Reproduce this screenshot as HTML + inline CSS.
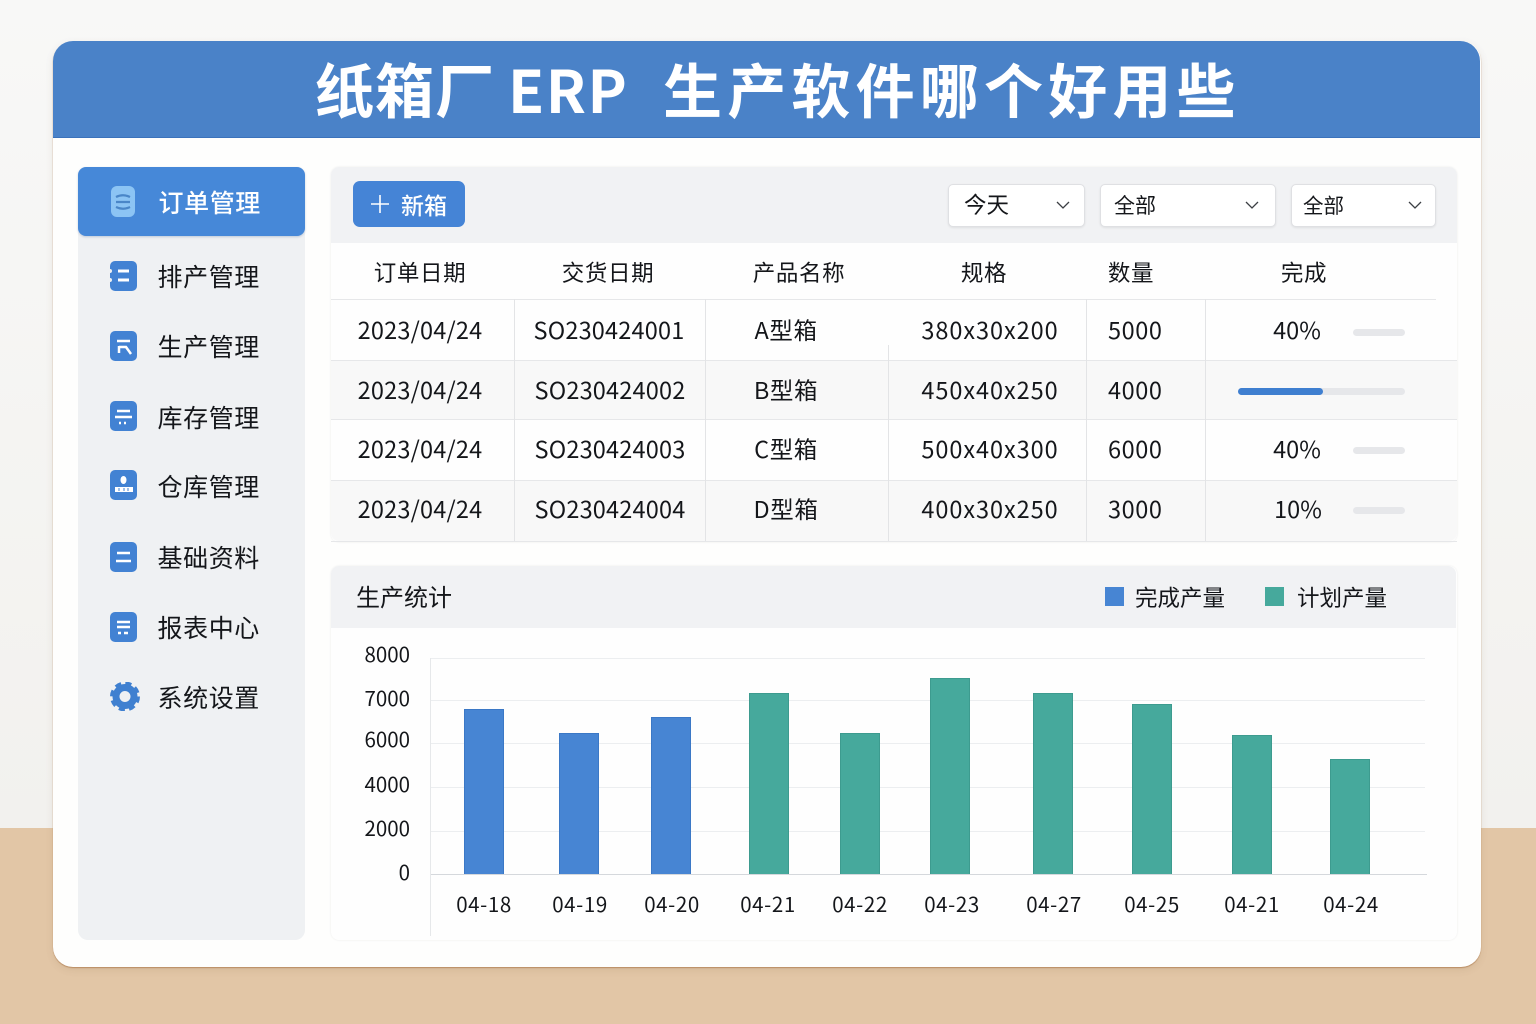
<!DOCTYPE html>
<html lang="zh-CN"><head><meta charset="utf-8"><title>纸箱厂 ERP 生产软件哪个好用些</title>
<style>
*{margin:0;padding:0;box-sizing:border-box}
html,body{width:1536px;height:1024px;overflow:hidden}
body{position:relative;background:linear-gradient(#f8f8f7,#f2f1ee 828px);font-family:"Liberation Sans","Noto Sans CJK SC",sans-serif;color:#14161a}
div,span,svg{position:absolute}
.t{font-family:"Noto Sans CJK SC",sans-serif;white-space:nowrap;line-height:30px;height:30px;font-size:23.5px}
.c{transform:translateX(-50%)}
.n{font-size:25px;letter-spacing:.6px;left:157.5px}
.h{font-size:22.5px;letter-spacing:.6px}
.y{font-size:20.5px;text-align:right;right:1126px}
.x{font-size:20.5px;letter-spacing:.6px}
.d{letter-spacing:.2px}
.s{letter-spacing:.95px}
.q{letter-spacing:.6px}
.ti{top:44px;height:88px;line-height:88px;font-size:59px;font-weight:700;color:#fff}
.v{background:#e3e4e6;width:1px;top:299px;height:242px}
.r{background:#e6e7e9;height:1px;left:331px;width:1126px}
.g{background:#eceef0;height:1px;left:430px;width:995px}
.bb{background:#4785d3;border:1px solid #3b78c6;border-bottom:0;width:40px}
.bg{background:#46a99c;border:1px solid #3d9b8f;border-bottom:0;width:40px}
.sel{background:#fff;border:1px solid #dfe0e3;border-radius:5px;top:184px;height:43px;box-shadow:0 1px 2px rgba(0,0,0,.08)}
.tr{background:#e6e7ea;height:7px;border-radius:4px}
.ic{left:110px;width:27px;height:30px;background:#4282d3;border-radius:5px}
</style></head><body>
<div style="left:0;top:828px;width:1536px;height:196px;background:#e2c6a6"></div>
<div style="left:53px;top:41px;width:1428px;height:926px;background:#fefefd;border-radius:20px;box-shadow:0 1px 1px #b98c62,0 3px 8px rgba(120,90,60,.12)"></div>
<div style="left:53px;top:41px;width:1427px;height:97px;background:#4a82c8;border-radius:20px 20px 0 0;border-bottom:1px solid #3b72bb"></div>
<span class="t ti" style="left:315px;letter-spacing:1px">纸箱厂</span>
<span class="t ti" style="left:508px;letter-spacing:1.5px">ERP</span>
<span class="t ti" style="left:663px;letter-spacing:5.2px">生产软件哪个好用些</span>

<div style="left:78px;top:167px;width:227px;height:773px;background:#eff1f3;border-radius:10px"></div>
<div style="left:78px;top:167px;width:227px;height:69px;background:#4688d8;border-radius:8px;box-shadow:0 1px 2px rgba(40,80,140,.25)"></div>
<svg style="left:110px;top:186px" width="26" height="32" viewBox="0 0 26 32"><rect x="1" y="0" width="24" height="31" rx="6" fill="#8cc4f4"/><path d="M6 11q7-3.500 14 0M6 16h14M6 21q7 3.500 14 0" stroke="#4a86c8" stroke-width="2.200" fill="none"/></svg>
<span class="t n" style="top:187px;left:158.500px;color:#fff;font-weight:500">订单管理</span>

<svg class="ic" style="top:261px" viewBox="0 0 27 30"><path d="M8 10h11M8 19h11" stroke="#fff" stroke-width="3"/><circle cx="0" cy="10" r="2" fill="#eff1f3"/><circle cx="0" cy="19" r="2" fill="#eff1f3"/></svg>
<span class="t n" style="top:261px">排产管理</span>
<svg class="ic" style="top:331px" viewBox="0 0 27 30"><path d="M7 10h13M9 15v7M9 16h7l5 7" stroke="#fff" stroke-width="2.500" fill="none"/></svg>
<span class="t n" style="top:331px">生产管理</span>
<svg class="ic" style="top:401px" viewBox="0 0 27 30"><path d="M7 10h13M5 16h17M9 22h2M14 22h2" stroke="#fff" stroke-width="2.500" fill="none"/></svg>
<span class="t n" style="top:402px">库存管理</span>
<svg class="ic" style="top:470px" viewBox="0 0 27 30"><ellipse cx="13.500" cy="10" rx="3" ry="4" fill="#fff"/><rect x="5" y="17" width="18" height="5" fill="#fff"/><path d="M9 18v3M14 18v3M18 18v3" stroke="#4282d3"/></svg>
<span class="t n" style="top:471px">仓库管理</span>
<svg class="ic" style="top:542px" viewBox="0 0 27 30"><path d="M7 11h13M6 19h15" stroke="#fff" stroke-width="2.500"/></svg>
<span class="t n" style="top:542px">基础资料</span>
<svg class="ic" style="top:612px" viewBox="0 0 27 30"><path d="M7 10h13M7 15h13M8 21h3M14 21h4" stroke="#fff" stroke-width="2.500"/></svg>
<span class="t n" style="top:612px">报表中心</span>
<svg style="left:110px;top:682px" width="30" height="29" viewBox="0 0 30 29"><circle cx="15" cy="14.500" r="9" fill="none" stroke="#3f80d0" stroke-width="7"/><circle cx="15" cy="14.500" r="13" fill="none" stroke="#3f80d0" stroke-width="4" stroke-dasharray="6 4.200"/></svg>
<span class="t n" style="top:682px">系统设置</span>

<div style="left:331px;top:167px;width:1126px;height:375px;background:#fefefe;border-radius:8px;box-shadow:0 0 2px rgba(0,0,0,.08)"></div>
<div style="left:331px;top:167px;width:1126px;height:76px;background:#f1f2f4;border-radius:8px 8px 0 0"></div>
<div style="left:353px;top:181px;width:112px;height:46px;background:#4584d6;border-radius:7px"></div>
<svg style="left:370px;top:194px" width="20" height="20"><path d="M10 1v18M1 10h18" stroke="#fff" stroke-width="1.600"/></svg>
<span class="t" style="left:401px;top:189px;color:#fff;font-size:23px;font-weight:500">新箱</span>
<div class="sel" style="left:948px;width:137px"></div><span class="t" style="left:964px;top:189px;font-size:22.500px">今天</span>
<div class="sel" style="left:1100px;width:176px"></div><span class="t" style="left:1114px;top:190px;font-size:21px">全部</span>
<div class="sel" style="left:1291px;width:145px"></div><span class="t" style="left:1303px;top:189px;font-size:20.500px">全部</span>
<svg style="left:1056px;top:200px" width="14" height="10"><path d="M1 2l6 6 6-6" fill="none" stroke="#3c3f44" stroke-width="1.300"/></svg>
<svg style="left:1245px;top:200px" width="14" height="10"><path d="M1 2l6 6 6-6" fill="none" stroke="#3c3f44" stroke-width="1.300"/></svg>
<svg style="left:1408px;top:200px" width="14" height="10"><path d="M1 2l6 6 6-6" fill="none" stroke="#3c3f44" stroke-width="1.300"/></svg>

<div style="left:331px;top:361px;width:1126px;height:58px;background:#f8f8f8"></div>
<div style="left:331px;top:481px;width:1126px;height:60px;background:#f8f8f8;border-radius:0 0 8px 8px"></div>
<div class="r" style="top:299px;width:1105px"></div><div class="r" style="top:360px"></div><div class="r" style="top:419px"></div><div class="r" style="top:480px"></div><div class="r" style="top:541px"></div>
<div class="v" style="left:514px"></div><div class="v" style="left:705px"></div><div class="v" style="left:888px;top:345px;height:196px"></div><div class="v" style="left:1086px"></div><div class="v" style="left:1205px"></div>

<span class="t h c" style="left:420px;top:257px">订单日期</span>
<span class="t h c" style="left:608px;top:257px">交货日期</span>
<span class="t h c" style="left:799px;top:257px">产品名称</span>
<span class="t h c" style="left:984px;top:257px">规格</span>
<span class="t h c" style="left:1131px;top:257px">数量</span>
<span class="t h c" style="left:1304px;top:257px">完成</span>

<span class="t c d" style="left:420px;top:314px">2023/04/24</span><span class="t c d" style="left:609px;top:314px">SO230424001</span><span class="t c q" style="left:786px;top:314px">A型箱</span><span class="t c s" style="left:990px;top:314px">380x30x200</span><span class="t q" style="left:1108px;top:314px">5000</span><span class="t c" style="left:1297px;top:314px">40%</span><div class="tr" style="left:1353px;top:329px;width:52px"></div>
<span class="t c d" style="left:420px;top:374px">2023/04/24</span><span class="t c d" style="left:610px;top:374px">SO230424002</span><span class="t c q" style="left:786px;top:374px">B型箱</span><span class="t c s" style="left:990px;top:374px">450x40x250</span><span class="t q" style="left:1108px;top:374px">4000</span><div class="tr" style="left:1238px;top:388px;width:167px"></div><div class="tr" style="left:1238px;top:388px;width:85px;background:#3f7fd0"></div>
<span class="t c d" style="left:420px;top:433px">2023/04/24</span><span class="t c d" style="left:610px;top:433px">SO230424003</span><span class="t c q" style="left:786px;top:433px">C型箱</span><span class="t c s" style="left:990px;top:433px">500x40x300</span><span class="t q" style="left:1108px;top:433px">6000</span><span class="t c" style="left:1297px;top:433px">40%</span><div class="tr" style="left:1353px;top:447px;width:52px"></div>
<span class="t c d" style="left:420px;top:493px">2023/04/24</span><span class="t c d" style="left:610px;top:493px">SO230424004</span><span class="t c q" style="left:786px;top:493px">D型箱</span><span class="t c s" style="left:990px;top:493px">400x30x250</span><span class="t q" style="left:1108px;top:493px">3000</span><span class="t c" style="left:1298px;top:493px">10%</span><div class="tr" style="left:1353px;top:507px;width:52px"></div>

<div style="left:331px;top:566px;width:1126px;height:374px;background:#fefefe;border-radius:8px;box-shadow:0 0 2px rgba(0,0,0,.08)"></div>
<div style="left:331px;top:566px;width:1125px;height:62px;background:#f1f2f4;border-radius:8px 8px 0 0"></div>
<span class="t" style="left:356px;top:581px;font-size:24px">生产统计</span>
<div style="left:1105px;top:587px;width:19px;height:19px;background:#4785d3"></div>
<span class="t" style="left:1135px;top:582px;font-size:22.500px">完成产量</span>
<div style="left:1265px;top:587px;width:19px;height:19px;background:#46a99c"></div>
<span class="t" style="left:1297px;top:582px;font-size:22.500px">计划产量</span>

<div class="g" style="top:658px"></div><div class="g" style="top:700px"></div><div class="g" style="top:743px"></div><div class="g" style="top:787px"></div><div class="g" style="top:831px"></div><div style="left:430px;top:874px;width:997px;height:1px;background:#d5d8dc"></div>
<div style="left:430px;top:658px;width:1px;height:278px;background:#e6e8ea"></div>
<span class="t y" style="top:638px">8000</span><span class="t y" style="top:682px">7000</span><span class="t y" style="top:723px">6000</span><span class="t y" style="top:768px">4000</span><span class="t y" style="top:812px">2000</span><span class="t y" style="top:856px">0</span>

<div class="bb" style="left:464px;top:709px;height:165px"></div>
<div class="bb" style="left:559px;top:733px;height:141px"></div>
<div class="bb" style="left:651px;top:717px;height:157px"></div>
<div class="bg" style="left:749px;top:693px;height:181px"></div>
<div class="bg" style="left:840px;top:733px;height:141px"></div>
<div class="bg" style="left:930px;top:678px;height:196px"></div>
<div class="bg" style="left:1033px;top:693px;height:181px"></div>
<div class="bg" style="left:1132px;top:704px;height:170px"></div>
<div class="bg" style="left:1232px;top:735px;height:139px"></div>
<div class="bg" style="left:1330px;top:759px;height:115px"></div>

<span class="t x c" style="left:484px;top:888px">04-18</span><span class="t x c" style="left:580px;top:888px">04-19</span><span class="t x c" style="left:672px;top:888px">04-20</span><span class="t x c" style="left:768px;top:888px">04-21</span><span class="t x c" style="left:860px;top:888px">04-22</span><span class="t x c" style="left:952px;top:888px">04-23</span><span class="t x c" style="left:1054px;top:888px">04-27</span><span class="t x c" style="left:1152px;top:888px">04-25</span><span class="t x c" style="left:1252px;top:888px">04-21</span><span class="t x c" style="left:1351px;top:888px">04-24</span>
</body></html>
